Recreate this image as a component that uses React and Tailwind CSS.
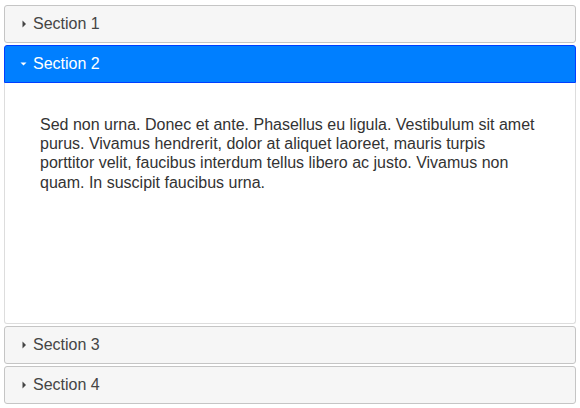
import React from "react";

function RightTri({ color }) {
  return (
    <svg width="16" height="16" viewBox="0 0 16 16" className="shrink-0">
      <polygon points="6.5,4.5 10,8 6.5,11.5" fill={color} />
    </svg>
  );
}
function DownTri({ color }) {
  return (
    <svg width="16" height="16" viewBox="0 0 16 16" className="shrink-0">
      <polygon points="4.5,6.5 10.5,6.5 7.5,9.5" fill={color} />
    </svg>
  );
}

function Header({ label, active }) {
  if (active) {
    return (
      <div className="box-border h-[38px] flex items-center pl-[11px] border border-[#003eff] bg-[#007fff] text-white rounded-t-[3px] text-[16px]">
        <DownTri color="#ffffff" />
        <span className="ml-[1px]">{label}</span>
      </div>
    );
  }
  return (
    <div className="box-border h-[38px] flex items-center pl-[11px] border border-[#c5c5c5] bg-[#f6f6f6] text-[#454545] rounded-[3px] text-[16px]">
      <RightTri color="#454545" />
      <span className="ml-[1px]">{label}</span>
    </div>
  );
}

export default function App() {
  return (
    <div
      className="w-[580px] h-[408px] bg-white px-[4px] pt-[5px] box-border"
      style={{ fontFamily: '"Liberation Sans", Arial, sans-serif' }}
    >
      <div className="flex flex-col">
        <Header label="Section 1" />
        <div className="mt-[2px]">
          <Header label="Section 2" active />
        </div>
        <div className="box-border h-[241px] border border-t-0 border-[#dddddd] rounded-b-[3px] bg-white px-[35px] pt-[16px] text-[#333333] text-[16px]">
          <p className="mt-[16px] leading-[19.2px]">
            Sed non urna. Donec et ante. Phasellus eu ligula. Vestibulum sit amet
            purus. Vivamus hendrerit, dolor at aliquet laoreet, mauris turpis
            porttitor velit, faucibus interdum tellus libero ac justo. Vivamus non
            quam. In suscipit faucibus urna.
          </p>
        </div>
        <div className="mt-[2px]">
          <Header label="Section 3" />
        </div>
        <div className="mt-[2px]">
          <Header label="Section 4" />
        </div>
      </div>
    </div>
  );
}
